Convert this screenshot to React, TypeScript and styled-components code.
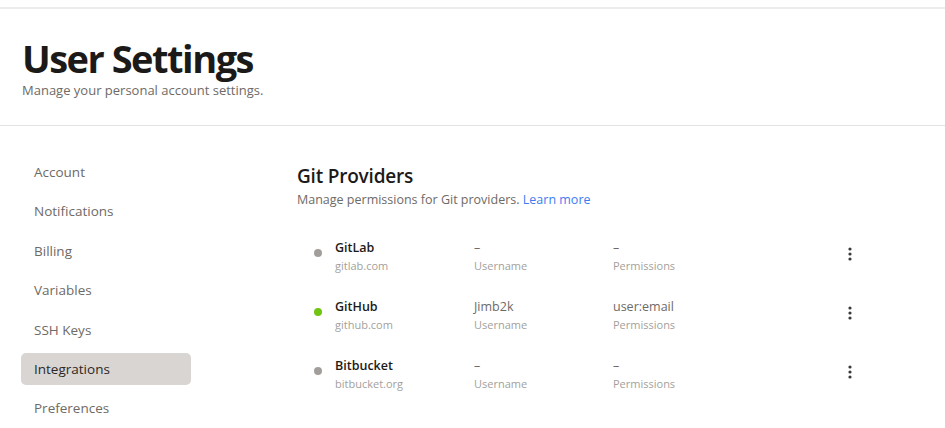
import React from "react";
import styled, { createGlobalStyle } from "styled-components";

const GlobalStyle = createGlobalStyle`
  body {
    margin: 0;
    background: #fff;
    font-family: "Open Sans", "Noto Sans", sans-serif;
    color: #1c1b1a;
  }
`;

const navItems = [
  "Account",
  "Notifications",
  "Billing",
  "Variables",
  "SSH Keys",
  "Integrations",
  "Preferences",
];

const providers = [
  { name: "GitLab", domain: "gitlab.com", user: "–", perms: "–", connected: false },
  { name: "GitHub", domain: "github.com", user: "Jimb2k", perms: "user:email", connected: true },
  { name: "Bitbucket", domain: "bitbucket.org", user: "–", perms: "–", connected: false },
];

export default function App() {
  return (
    <Page>
      <GlobalStyle />
      <Header>
        <Title>User Settings</Title>
        <Subtitle>Manage your personal account settings.</Subtitle>
      </Header>
      <Body>
        <Sidebar>
          {navItems.map((item) => (
            <NavItem key={item} $active={item === "Integrations"}>
              {item}
            </NavItem>
          ))}
        </Sidebar>
        <Content>
          <SectionTitle>Git Providers</SectionTitle>
          <SectionText>
            Manage permissions for Git providers. <LearnMore href="#">Learn more</LearnMore>
          </SectionText>
          <ProviderList>
            {providers.map((p) => (
              <ProviderRow key={p.name}>
                <StatusDot $on={p.connected} />
                <Cell>
                  <ProviderName>{p.name}</ProviderName>
                  <Meta>{p.domain}</Meta>
                </Cell>
                <Cell>
                  <Value>{p.user}</Value>
                  <Meta>Username</Meta>
                </Cell>
                <Cell>
                  <Value>{p.perms}</Value>
                  <Meta>Permissions</Meta>
                </Cell>
                <MenuButton aria-label="More">
                  <svg width="4" height="14" viewBox="0 0 4 14">
                    <circle cx="2" cy="2" r="1.6" fill="#3a3a3a" />
                    <circle cx="2" cy="7" r="1.6" fill="#3a3a3a" />
                    <circle cx="2" cy="12" r="1.6" fill="#3a3a3a" />
                  </svg>
                </MenuButton>
              </ProviderRow>
            ))}
          </ProviderList>
        </Content>
      </Body>
    </Page>
  );
}

const Page = styled.div`
  padding-top: 7px;
  width: 945px;
  height: 428px;
  box-sizing: border-box;
  overflow: hidden;
`;

const Header = styled.header`
  border-top: 2px solid #ececec;
  border-bottom: 1px solid #e3e3e3;
  padding: 27px 22px 26px;
`;

const Title = styled.h1`
  margin: 0;
  font-size: 38px;
  line-height: 44px;
  font-weight: 700;
  letter-spacing: -1.5px;
  color: #1c1a18;
`;

const Subtitle = styled.p`
  margin: 1px 0 0;
  font-size: 13px;
  line-height: 18px;
  color: #6e6a66;
`;

const Body = styled.div`
  display: flex;
  padding-top: 30px;
`;

const Sidebar = styled.nav`
  width: 170px;
  margin-left: 21px;
  display: flex;
  flex-direction: column;
  gap: 7.4px;
`;

const NavItem = styled.div<{ $active?: boolean }>`
  height: 32px;
  display: flex;
  align-items: center;
  padding-left: 13px;
  border-radius: 5px;
  font-size: 13.5px;
  color: ${(p) => (p.$active ? "#2b2826" : "#6e6a66")};
  background: ${(p) => (p.$active ? "#d9d5d2" : "transparent")};
`;

const Content = styled.main`
  flex: 1;
  margin-left: 106px;
  padding-top: 7px;
`;

const SectionTitle = styled.h2`
  margin: 0;
  font-size: 19px;
  line-height: 26px;
  font-weight: 600;
  letter-spacing: -0.2px;
  color: #1c1a18;
`;

const SectionText = styled.p`
  margin: 2px 0 0;
  font-size: 12.5px;
  line-height: 18px;
  color: #6e6a66;
`;

const LearnMore = styled.a`
  color: #3d7cf0;
  text-decoration: none;
`;

const ProviderList = styled.div`
  display: flex;
  flex-direction: column;
  gap: 23px;
  margin-top: 30px;
  padding-left: 17px;
`;

const ProviderRow = styled.div`
  display: grid;
  grid-template-columns: 21px 139px 139px 1fr 22px;
  align-items: start;
  padding-right: 84px;
`;

const StatusDot = styled.span<{ $on?: boolean }>`
  width: 8px;
  height: 8px;
  border-radius: 50%;
  background: ${(p) => (p.$on ? "#6fc414" : "#a29e9b")};
  margin-top: 10px;
`;

const Cell = styled.div`
  display: flex;
  flex-direction: column;
`;

const ProviderName = styled.span`
  font-size: 12.5px;
  line-height: 18px;
  font-weight: 600;
  color: #1c1a18;
`;

const Value = styled.span`
  font-size: 12.5px;
  line-height: 18px;
  color: #6e6a66;
`;

const Meta = styled.span`
  font-size: 11px;
  line-height: 18px;
  color: #a39f9c;
`;

const MenuButton = styled.button`
  border: 0;
  background: none;
  padding: 0;
  margin-top: 4px;
  width: 22px;
  height: 22px;
  display: flex;
  align-items: center;
  justify-content: center;
  cursor: pointer;
`;
